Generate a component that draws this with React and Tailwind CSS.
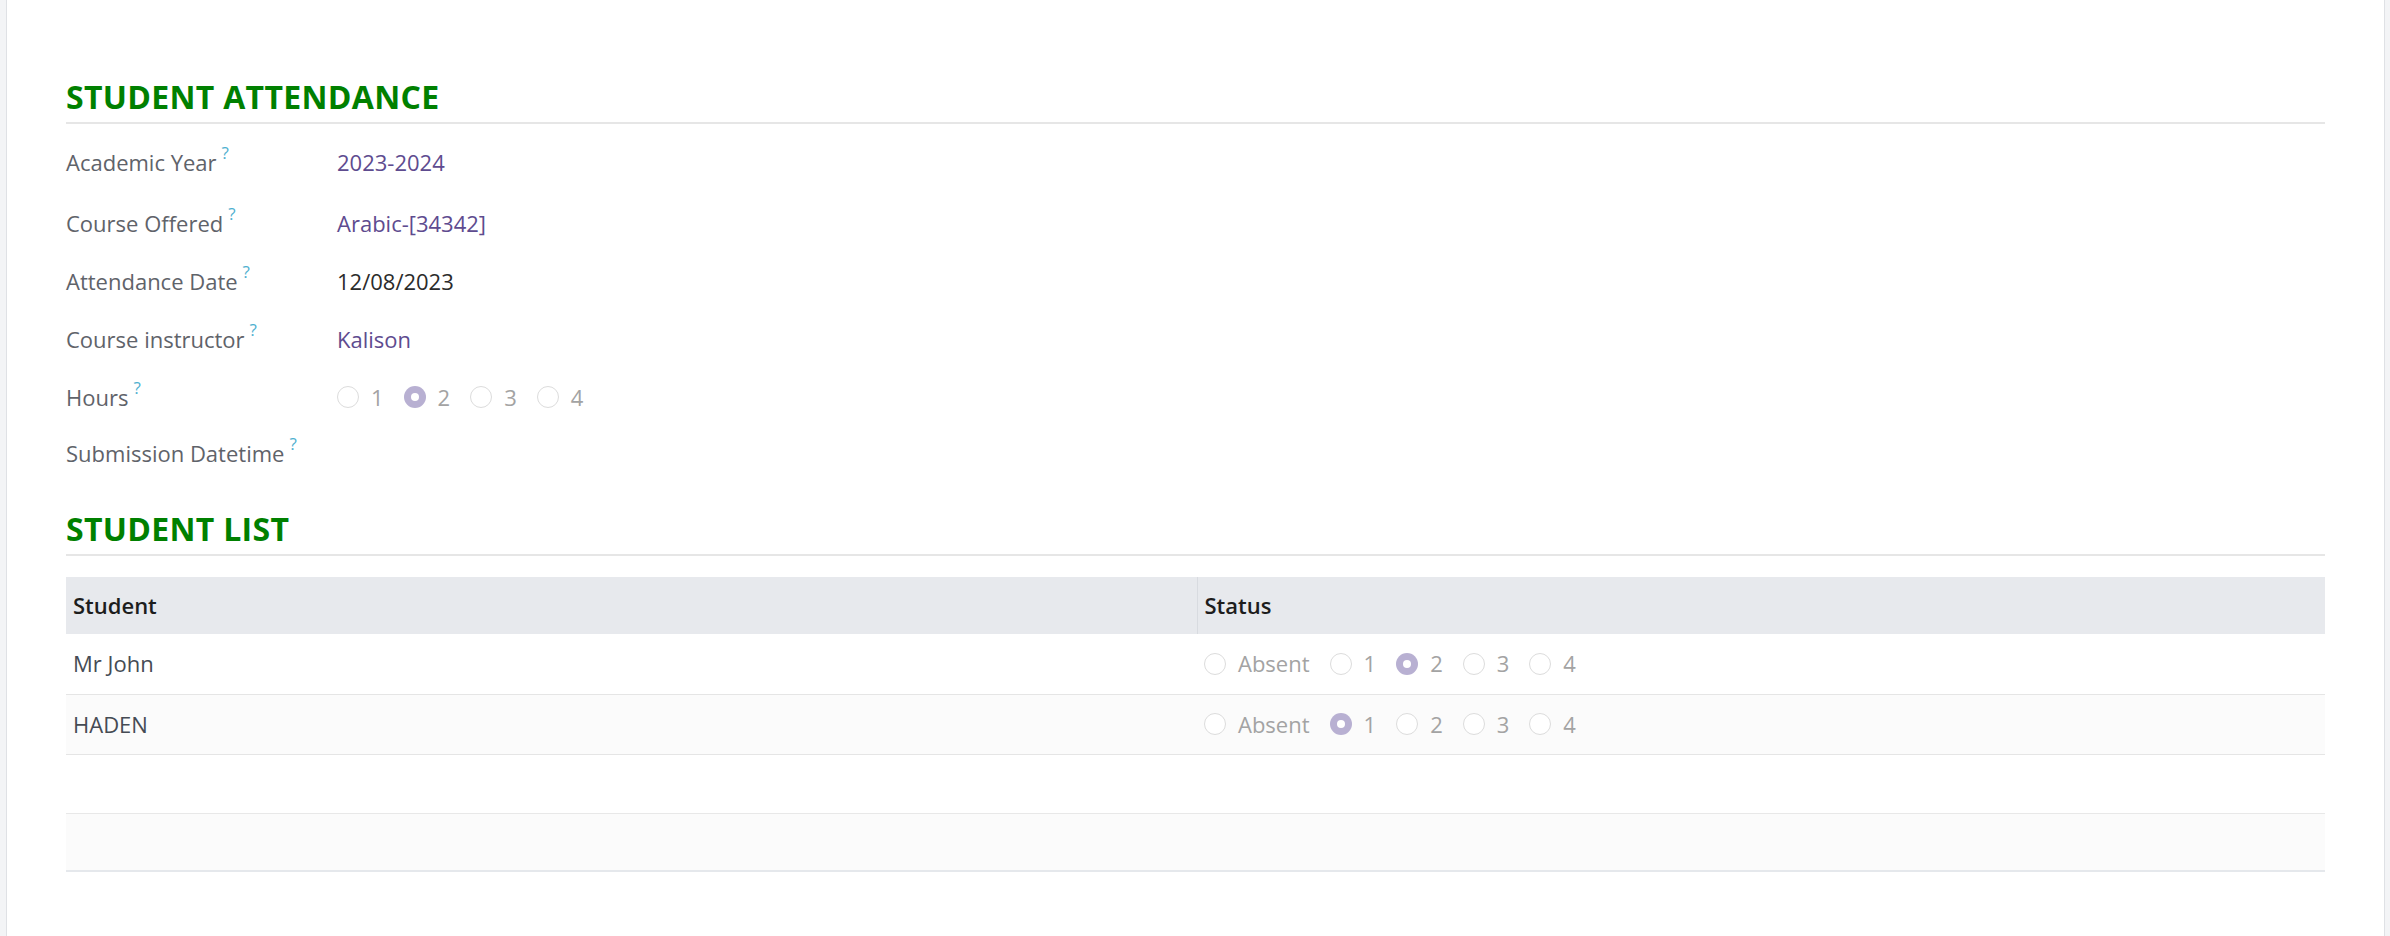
import React from 'react';

const fields = [
  { label: 'Academic Year', value: '2023-2024', link: true, h: 'h-[61px]' },
  { label: 'Course Offered', value: 'Arabic-[34342]', link: true, h: 'h-[60px]' },
  { label: 'Attendance Date', value: '12/08/2023', h: 'h-[56px]' },
  { label: 'Course instructor', value: 'Kalison', link: true, h: 'h-[60px]' },
  { label: 'Hours', radios: ['1', '2', '3', '4'], checked: '2', h: 'h-[56px]' },
  { label: 'Submission Datetime', value: '', h: 'h-[56px]' },
];

const students = [
  { name: 'Mr John', checked: '2' },
  { name: 'HADEN', checked: '1' },
];

function Radio({ label, checked }) {
  return (
    <div className="flex items-center gap-[12px] mr-[20px]">
      {checked ? (
        <span className="w-[22px] h-[22px] rounded-full bg-[#b8b0d2] flex items-center justify-center">
          <span className="w-[8px] h-[8px] rounded-full bg-white" />
        </span>
      ) : (
        <span className="w-[22px] h-[22px] rounded-full border border-[#dcdcdc] bg-white" />
      )}
      <span className="text-[#a3a3a3]">{label}</span>
    </div>
  );
}

function RadioGroup({ items, checked }) {
  return (
    <div className="flex items-center">
      {items.map((it) => (
        <Radio key={it} label={it} checked={it === checked} />
      ))}
    </div>
  );
}

function Label({ children }) {
  return (
    <div className="w-[271px] shrink-0 text-[#5f636a] flex items-start">
      <span>{children}</span>
      <span className="ml-[5px] text-[17px] leading-none text-[#4fb0cf] -mt-[2px]">?</span>
    </div>
  );
}

function Heading({ children }) {
  return (
    <div className="border-b-2 border-[#e6e6e6] pb-[5px]">
      <h2 className="text-[32px] font-bold text-[#008000] leading-[40px] tracking-[0.3px]">{children}</h2>
    </div>
  );
}

export default function App() {
  return (
    <div className="flex h-[936px] bg-white" style={{ fontFamily: '"Open Sans", "Noto Sans", sans-serif' }}>
      <div className="w-[7px] shrink-0 bg-[#f3f4f6] border-r border-[#dfe1e5]" />
      <div className="flex-1 px-[59px] pt-[77px] text-[22px]">
        <Heading>STUDENT ATTENDANCE</Heading>
        <div className="pt-[8px]">
          {fields.map((f) => (
            <div key={f.label} className={`flex items-center ${f.h}`}>
              <Label>{f.label}</Label>
              {f.radios ? (
                <RadioGroup items={f.radios} checked={f.checked} />
              ) : (
                <div className={f.link ? 'text-[#5e4b8f]' : 'text-[#2b2b2b]'}>{f.value}</div>
              )}
            </div>
          ))}
        </div>

        <div className="mt-[28px]">
          <Heading>STUDENT LIST</Heading>
        </div>

        <table className="w-full mt-[21px] border-collapse">
          <thead>
            <tr className="bg-[#e7e9ed] h-[57px]">
              <th className="w-[1131px] text-left font-semibold text-[#1d1d1d] px-[7px] border-r border-[#d8dbe0]">Student</th>
              <th className="text-left font-semibold text-[#1d1d1d] px-[7px]">Status</th>
            </tr>
          </thead>
          <tbody>
            {students.map((s, i) => (
              <tr key={s.name} className={`h-[60px] border-b border-[#e5e5e5] ${i % 2 ? 'bg-[#fbfbfb]' : 'bg-white'}`}>
                <td className="px-[7px] text-[#454b54]">{s.name}</td>
                <td className="px-[7px]">
                  <RadioGroup items={['Absent', '1', '2', '3', '4']} checked={s.checked} />
                </td>
              </tr>
            ))}
            <tr className="h-[59px] border-b border-[#e8e8e8] bg-white">
              <td />
              <td />
            </tr>
            <tr className="h-[58px] border-b-2 border-[#e5e8ec] bg-[#fbfbfb]">
              <td />
              <td />
            </tr>
          </tbody>
        </table>
      </div>
      <div className="w-[6px] shrink-0 bg-[#f3f4f6] border-l border-[#dfe1e5]" />
    </div>
  );
}
